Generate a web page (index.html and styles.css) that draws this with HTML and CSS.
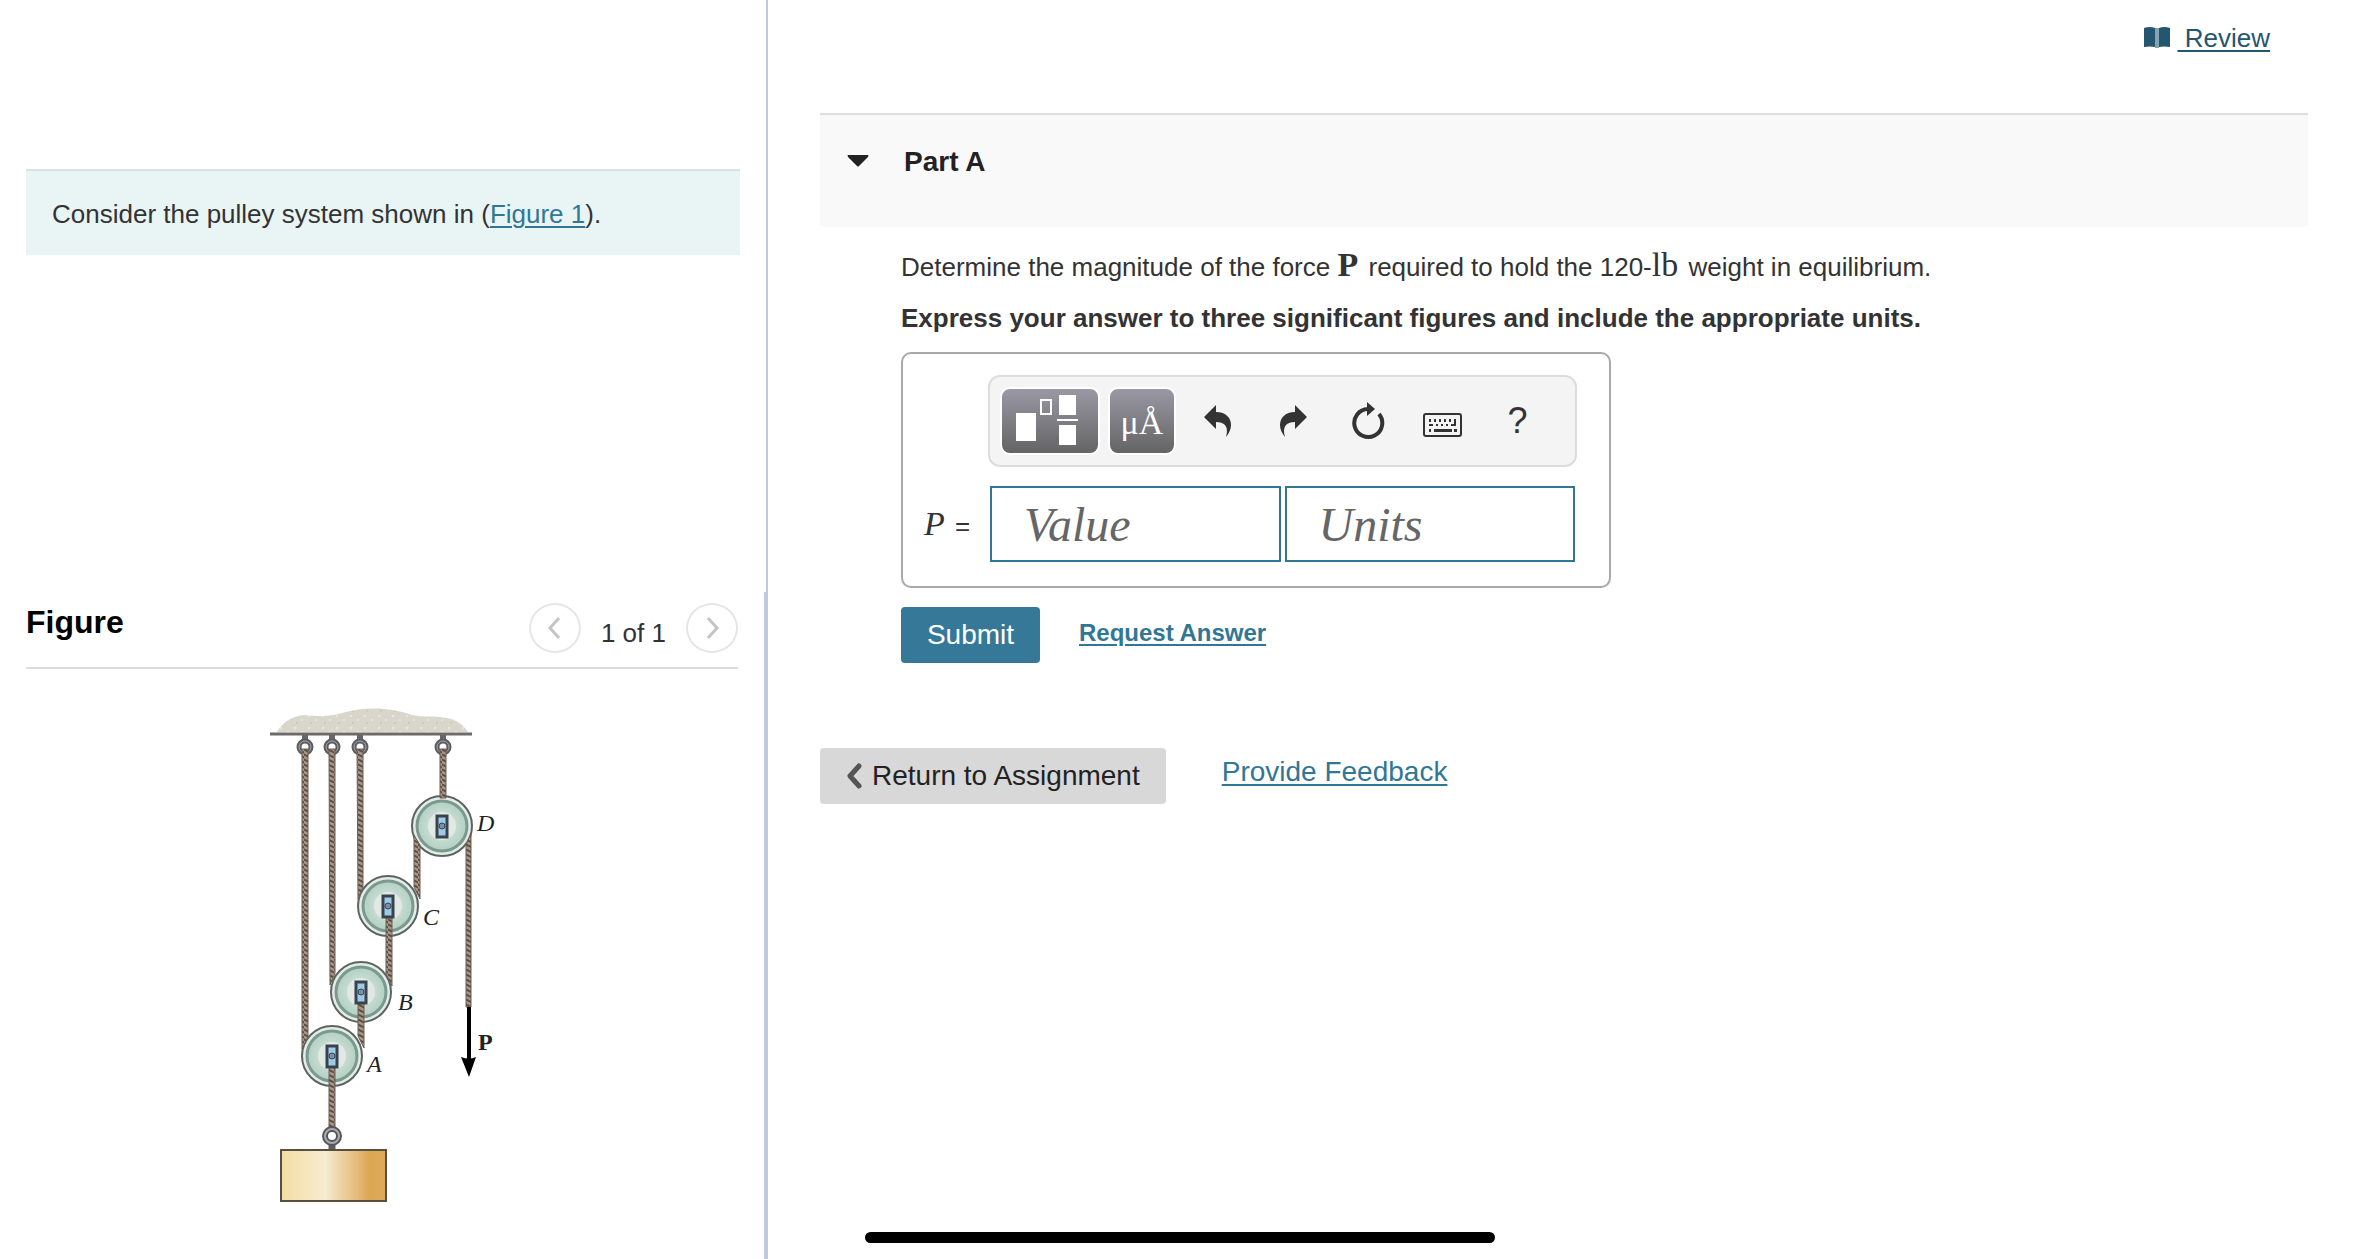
FILE: index.html
```html
<!DOCTYPE html>
<html lang="en">
<head>
  <meta charset="UTF-8" />
  <title>Part A - Pulley System</title>
  <meta name="viewport" content="width=device-width, initial-scale=1.0" />
  <link rel="stylesheet" href="styles.css">
</head>
<body>
  <div class="sidebar">
    <section class="problem">
      <p class="notice">Consider the pulley system shown in (<a href="#figure">Figure 1</a>).</p>
    </section>

    <section class="figure-panel" id="figure">
      <div class="figure-header">
        <h2>Figure</h2>
        <div class="pager">
          <button type="button" class="pager-button" aria-label="Previous figure">
            <svg width="16" height="24" viewBox="0 0 16 24"><path d="M12 2 3 12l9 10" /></svg>
          </button>
          <span>1 of 1</span>
          <button type="button" class="pager-button" aria-label="Next figure">
            <svg width="16" height="24" viewBox="0 0 16 24"><path d="M4 2l9 10-9 10" /></svg>
          </button>
        </div>
      </div>

      <svg class="pulley-figure" width="264" height="530" viewBox="0 0 264 530" role="img" aria-label="Pulley system">
        <defs>
          <pattern id="ropeFill" width="6" height="5" patternUnits="userSpaceOnUse">
            <rect width="6" height="5" fill="#a89686" />
            <path d="M-1 0l8 4M-1 5l8 4" stroke="#5a4c43" stroke-width="2" />
          </pattern>
          <pattern id="sandFill" width="14" height="12" patternUnits="userSpaceOnUse">
            <rect width="14" height="12" fill="#d9d7cb" />
            <circle cx="3" cy="3" r="1" fill="#efede2" />
            <circle cx="10" cy="7" r="1" fill="#eceadf" />
            <circle cx="5" cy="10" r="1" fill="#cac7b8" />
          </pattern>
          <radialGradient id="wheelFill">
            <stop offset="0" stop-color="#e9f0ea" />
            <stop offset="0.5" stop-color="#d3e3da" />
            <stop offset="0.6" stop-color="#c3dacf" />
            <stop offset="1" stop-color="#b3cfc3" />
          </radialGradient>
          <linearGradient id="weightFill">
            <stop offset="0" stop-color="#f3dda4" />
            <stop offset="0.42" stop-color="#f7ecd0" />
            <stop offset="0.85" stop-color="#dca653" />
            <stop offset="1" stop-color="#dfab5b" />
          </linearGradient>
          <g id="pulley">
            <circle r="30" fill="#e3ece8" stroke="#5c6462" stroke-width="2" />
            <circle r="25" fill="url(#wheelFill)" stroke="#7a9a8e" stroke-width="3" />
            <circle r="14" fill="#e1e9e4" />
          </g>
          <g id="pin">
            <rect x="-5" y="-10" width="10" height="21" fill="#9ccbe8" stroke="#3a434d" stroke-width="3" />
            <circle r="3" fill="#7a8ea4" stroke="#3a434d" />
          </g>
          <g id="eye">
            <path d="M0-12v6" stroke="#66666c" stroke-width="6" />
            <circle r="6" fill="#fff" stroke="#5c5c62" stroke-width="5" />
            <circle r="6" fill="none" stroke="#a5a5aa" />
          </g>
        </defs>

        <!-- ceiling -->
        <path d="M27 43c6-10 14-16 28-17 18 2 27 1 41-3 22-6 47-4 66 3 17 4 43-4 56 17z" fill="url(#sandFill)" />
        <path d="M20 45h202" stroke="#6d6a67" stroke-width="3" />
        <use href="#eye" x="55" y="58" />
        <use href="#eye" x="82" y="58" />
        <use href="#eye" x="110" y="58" />
        <use href="#eye" x="193" y="58" />

        <!-- wheels -->
        <use href="#pulley" x="192" y="137" />
        <use href="#pulley" x="138" y="217" />
        <use href="#pulley" x="111" y="303" />
        <use href="#pulley" x="82" y="367" />

        <!-- ropes -->
        <g fill="url(#ropeFill)" stroke="#6b5e55" stroke-width="1">
          <path d="M52 60h6v288l-6 12z" />
          <path d="M79 60h6v224l-5 12z" />
          <path d="M107 60h6v138l-5 12z" />
          <path d="M190 60h6v49h-6z" />
          <path d="M164 146l6 10v54l-6-12z" />
          <path d="M216 156l5-12v174h-5z" />
          <path d="M136 227h6v70l-6-12z" />
          <path d="M108 313h6v46l-6-12z" />
          <path d="M79 377h6v64h-6z" />
        </g>
        <use href="#pin" x="192" y="137" />
        <use href="#pin" x="138" y="217" />
        <use href="#pin" x="111" y="303" />
        <use href="#pin" x="82" y="367" />

        <!-- weight -->
        <path d="M82 455v7" stroke="#5c5c62" stroke-width="7" />
        <circle cx="82" cy="447" r="7" fill="none" stroke="#55555c" stroke-width="6" />
        <circle cx="82" cy="447" r="7" fill="none" stroke="#a9a9ae" stroke-width="2" />
        <rect x="31" y="461" width="105" height="51" fill="url(#weightFill)" stroke="#57503f" stroke-width="2" />

        <!-- force P -->
        <path d="M219 318v54" stroke="#000" stroke-width="4" />
        <path d="M211 368q8 3 15 0l-7 20z" fill="#000" />

        <g class="figure-label">
          <text x="227" y="142">D</text>
          <text x="173" y="236">C</text>
          <text x="148" y="321">B</text>
          <text x="117" y="383">A</text>
          <text x="228" y="361" class="force">P</text>
        </g>
      </svg>
    </section>
  </div>

  <div class="main">
    <div class="topbar">
      <svg width="26" height="22" viewBox="0 0 26 22" fill="#24566f">
        <path d="M0 1q6-2 11 0v19q-5-1-11 0zM26 1q-6-2-11 0v19q5-1 11 0z" />
        <path d="M11 1h4v20h-4z" fill="#86a3b0" />
      </svg>
      <a href="#">&nbsp;Review</a>
    </div>

    <div class="part-header">
      <svg width="22" height="12" viewBox="0 0 22 12"><path d="M1 0h20q1 0 0 2l-9 9q-1 1-2 0L1 2q-1-2 0-2z" fill="#222" /></svg>
      <h1>Part A</h1>
    </div>

    <div class="part-body">
      <p>Determine the magnitude of the force <b class="math">P</b> required to hold the 120-<span class="math">lb</span> weight in equilibrium.</p>
      <p class="instructions"><strong>Express your answer to three significant figures and include the appropriate units.</strong></p>

      <div class="answer-box">
        <div class="toolbar">
          <button type="button" class="tool-dark template" aria-label="Templates">
            <svg width="96" height="64" viewBox="0 0 96 64" fill="#fff">
              <path d="M14 24h20v28H14zM57 6h17v20H57zM57 36h17v20H57zM55 30h21v2H55z" />
              <path d="M39 11h10v14H39z" fill="none" stroke="#fff" stroke-width="2" />
            </svg>
          </button>
          <button type="button" class="tool-dark symbols" aria-label="Symbols">μÅ</button>
          <button type="button" class="tool" aria-label="Undo">
            <svg width="28" height="32" viewBox="0 0 28 32"><path d="M0 12 12 0v7c10 0 15 6 15 13q0 6-5 12c3-10-1-15-10-15v7z" /></svg>
          </button>
          <button type="button" class="tool" aria-label="Redo">
            <svg width="28" height="32" viewBox="0 0 28 32"><path d="M28 12 16 0v7C6 7 1 13 1 20q0 6 5 12C3 22 7 17 16 17v7z" /></svg>
          </button>
          <button type="button" class="tool" aria-label="Reset">
            <svg width="34" height="38" viewBox="0 0 34 38">
              <path d="M17 7A14 14 0 1 0 28 12" fill="none" stroke="#333" stroke-width="4" />
              <path d="M16 0l8 7-8 7z" />
            </svg>
          </button>
          <button type="button" class="tool keyboard" aria-label="Keyboard">
            <svg width="40" height="24" viewBox="0 0 40 24">
              <rect x="1" y="1" width="37" height="22" rx="2" fill="none" stroke="#333" stroke-width="2" />
              <path d="M6 6h2v3H6zM11 6h2v3h-2zM16 6h2v3h-2zM21 6h2v3h-2zM26 6h2v3h-2zM31 6h2v7h-5v-2h3zM6 11h4v2H6zM13 11h2v2h-2zM18 11h2v2h-2zM23 11h2v2h-2zM6 16h2v3H6zM11 16h18v3H11zM31 16h3v3h-3z" />
            </svg>
          </button>
          <button type="button" class="tool help" aria-label="Help">?</button>
        </div>
        <label for="valueInput"><i class="math">P</i> =</label>
        <div class="fields">
          <input type="text" id="valueInput" placeholder="Value" />
          <input type="text" id="unitsInput" placeholder="Units" aria-label="Units" />
        </div>
      </div>

      <div class="actions">
        <button type="submit" class="submit-button">Submit</button>
        <a href="#" class="request">Request Answer</a>
      </div>
    </div>

    <div class="footer">
      <button type="button" class="return-button">
        <svg width="16" height="26" viewBox="0 0 16 26"><path d="M13 3 4 13l9 10" fill="none" stroke="#555" stroke-width="5" stroke-linecap="round" stroke-linejoin="round" /></svg>
        Return to Assignment
      </button>
      <a href="#">Provide Feedback</a>
    </div>
  </div>

  <div class="home-indicator"></div>
</body>
</html>
```
FILE: styles.css
```css
* {
  box-sizing: border-box;
}
body {
  margin: 0;
  min-height: 100vh;
  display: grid;
  grid-template-columns: 768fr 1592fr;
  font-family: "Liberation Sans", Arial, sans-serif;
  font-size: 26px;
  line-height: 32px;
  color: #333;
  background: #fff;
}
h1, h2, p {
  margin: 0;
}
a {
  color: #317795;
  text-decoration-thickness: 2px;
  text-underline-offset: 3px;
}
button {
  font-family: inherit;
  padding: 0;
  border: none;
  background: none;
  cursor: pointer;
}
svg {
  display: block;
  flex-shrink: 0;
}
.math {
  font-family: "Liberation Serif", "Times New Roman", serif;
  font-size: 34px;
  line-height: 1;
  padding-right: 3px;
}

/* left column */
.sidebar {
  display: flex;
  flex-direction: column;
}
.problem {
  flex: 0 0 47vh;
  padding: 169px 26px 0;
  border-right: 2px solid #becbdc;
}
.notice {
  padding: 27px 26px 25px;
  background: #e9f5f5;
  border-top: 2px solid #dce0de;
}
.figure-panel {
  flex: 1;
  padding: 11px 26px 0;
  border-right: 4px solid #becbdc;
}
.figure-header {
  display: flex;
  justify-content: space-between;
  height: 66px;
  border-bottom: 2px solid #ddd;
}
.figure-header h2 {
  font-size: 32px;
  color: #000;
  padding-top: 3px;
}
.pager {
  display: flex;
  gap: 20px;
}
.pager span {
  padding-top: 14px;
}
.pager-button {
  width: 52px;
  height: 50px;
  border: 2px solid #e6e6e6;
  border-radius: 50%;
  display: flex;
  align-items: center;
  justify-content: center;
}
.pager-button path {
  fill: none;
  stroke: #c4c4c4;
  stroke-width: 3px;
}
.pulley-figure {
  margin: 20px auto 0;
}
.figure-label {
  font-family: "Liberation Serif", "Times New Roman", serif;
  font-size: 24px;
  font-style: italic;
  fill: #222;
}
.figure-label .force {
  font-style: normal;
  font-weight: bold;
}

/* right column */
.main {
  padding: 22px 52px 0;
}
.topbar {
  display: flex;
  justify-content: flex-end;
  gap: 8px;
  padding: 0 38px 59px 0;
}
.topbar svg {
  margin-top: 5px;
}
.topbar a {
  color: #24566f;
}
.part-header {
  display: flex;
  align-items: flex-start;
  gap: 35px;
  height: 114px;
  padding: 31px 27px;
  background: #f9f9f9;
  border-top: 2px solid #dcdedd;
}
.part-header svg {
  margin-top: 9px;
}
.part-header h1 {
  font-size: 28px;
  color: #222;
}
.part-body {
  padding: 21px 81px 0;
}
.part-body p {
  height: 32px;
  margin-bottom: 22px;
}
.part-body .instructions {
  margin-bottom: 18px;
}
.answer-box {
  display: grid;
  grid-template-columns: 64px 589px;
  justify-content: end;
  align-items: center;
  row-gap: 19px;
  width: 710px;
  padding: 21px 32px 24px 0;
  border: 2px solid #a8a8a8;
  border-radius: 10px;
}
.toolbar {
  grid-column: 2;
  display: flex;
  align-items: center;
  height: 92px;
  padding: 0 10px;
  background: #f4f4f4;
  border: 2px solid #dcdcdc;
  border-radius: 12px;
}
.tool-dark {
  height: 68px;
  border: 2px solid #fff;
  border-radius: 10px;
  background: linear-gradient(#9a98a4, #646464);
  color: #fff;
}
.template {
  width: 100px;
  margin-right: 8px;
}
.symbols {
  width: 68px;
  margin-right: 4px;
  padding-top: 4px;
  font-family: "Liberation Serif", "Times New Roman", serif;
  font-size: 34px;
}
.tool {
  width: 75px;
  display: flex;
  justify-content: center;
  color: #333;
  fill: #333;
}
.keyboard {
  padding-top: 8px;
}
.help {
  font-size: 36px;
}
.answer-box label {
  white-space: nowrap;
}
.fields {
  display: flex;
  gap: 4px;
  padding: 0 2px;
}
.fields input {
  flex: 1;
  min-width: 0;
  height: 76px;
  padding: 0 32px;
  border: 2px solid #317795;
  font: italic 48px "Liberation Serif", "Times New Roman", serif;
}
.fields input::placeholder {
  color: #666;
  opacity: 1;
}
.actions {
  display: flex;
  align-items: flex-start;
  gap: 39px;
  margin-top: 19px;
}
.submit-button {
  width: 139px;
  height: 56px;
  font-size: 28px;
  color: #fff;
  background: #367898;
  border-radius: 4px;
}
.request {
  font-size: 24px;
  font-weight: bold;
  padding-top: 10px;
}
.footer {
  display: flex;
  align-items: flex-start;
  gap: 56px;
  margin-top: 85px;
  font-size: 28px;
}
.footer a {
  padding-top: 8px;
}
.return-button {
  display: flex;
  align-items: center;
  gap: 10px;
  height: 56px;
  padding: 0 26px;
  font-size: 28px;
  color: #222;
  background: #d8d8d8;
  border-radius: 4px;
}

.home-indicator {
  position: fixed;
  bottom: 16px;
  left: 50%;
  width: 630px;
  height: 11px;
  margin-left: -315px;
  border-radius: 6px;
  background: #000;
}
```
